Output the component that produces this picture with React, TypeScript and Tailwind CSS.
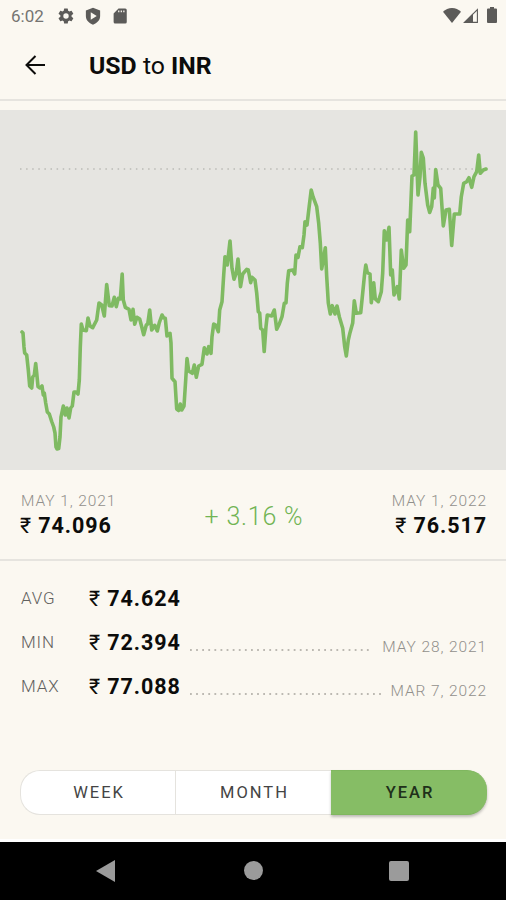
import clsx from "clsx";

const history: Array<[number, number]> = [
  [22, 332], [23, 333], [24, 347], [24.7, 353], [26.7, 355], [28.3, 370], [29.7, 386], [31.7, 388], [32.7, 377], [34.3, 375],
  [35.7, 363.5], [36.7, 373], [38, 386.5], [40, 388], [42, 386], [43.3, 395], [44.3, 393], [45.7, 403], [47.3, 412], [49.3, 414],
  [51.7, 421.5], [53.7, 427], [55, 433], [56, 447], [57, 449], [58.7, 448.5], [60, 437], [61, 417], [63.3, 406], [65.3, 415],
  [67, 408], [69, 418], [70.7, 408], [72.3, 406], [74, 392], [76, 392], [78, 394], [79.3, 380], [80.3, 347], [81.3, 324],
  [83, 330], [86.3, 330.7], [88, 318], [90, 326], [92.7, 327.7], [96.7, 320], [99, 303], [101.7, 305], [104.3, 316], [106.7, 284.5],
  [109.3, 305.7], [112, 306], [114.3, 297.3], [116.3, 306.7], [118.3, 298.3], [120.3, 299], [122.2, 274], [123.3, 300], [125.3, 307.3], [129, 309.3],
  [131, 320], [133, 309.3], [134.7, 324.3], [137, 317.3], [139.7, 319], [141.7, 326.7], [143.7, 334.7], [146.3, 325], [147.7, 324], [149.7, 310],
  [151.7, 330], [154.7, 325.3], [157.3, 331], [159.3, 322.7], [162, 315], [163.7, 318], [165.3, 318.3], [167, 336], [170, 333.3], [171, 343],
  [172, 378.3], [175, 381.7], [176.7, 409], [178.7, 410.5], [180.3, 404], [181.7, 410], [184, 406], [185.7, 380], [187, 358.5], [188.7, 371],
  [192.3, 373.3], [194.3, 365], [196.3, 377.3], [198.7, 366], [202, 364.3], [204.3, 347.7], [207, 354], [208.7, 346.7], [211, 353.3], [212, 336.7],
  [213.7, 324], [215.7, 325], [218.3, 331.7], [219.7, 310], [222, 301.7], [223.7, 275], [225, 256.7], [227.3, 265], [230, 241], [232, 268.3],
  [234, 279.3], [236.3, 273], [238, 259], [240.5, 286.7], [242.7, 274], [246.7, 269.3], [248.3, 270], [250.7, 282.7], [252, 277.3], [255, 280],
  [256.7, 293], [258.3, 311.7], [259.7, 313], [260.7, 328.3], [262.7, 330], [264.2, 351.5], [266, 326.7], [267.3, 315], [271.7, 316], [274.3, 310],
  [276.7, 329.3], [279.3, 324], [282, 316.7], [284.3, 303.3], [286, 303], [287.3, 283.3], [288.7, 270.7], [292.7, 270], [294.7, 274], [296, 255],
  [298, 257.3], [300, 246.7], [302.3, 247.7], [304, 235], [305, 221.7], [307, 225], [309, 208], [311.2, 190], [313, 196.7], [316.7, 206.7],
  [318.7, 223.3], [320.3, 243], [321.7, 269], [323.3, 260], [325.3, 247.7], [326.7, 276.7], [328.3, 303], [330.3, 314], [332.3, 305.7], [335, 314],
  [337, 306], [339.3, 316.7], [342.7, 328.3], [344.7, 346.7], [346.3, 356], [348.3, 340], [350, 332.7], [352.7, 323], [354.3, 300.7], [356.3, 313.3],
  [360.7, 312.7], [362.7, 293], [364.7, 273], [365.8, 265], [367.3, 272.7], [370, 274], [371.3, 302.7], [373.7, 282.7], [375.3, 299], [378.3, 301.7],
  [381.3, 291.7], [382.7, 273], [384.3, 230.7], [386.7, 240], [389, 227.3], [390.7, 275], [392.3, 270], [394, 295], [397.3, 286.7], [399.3, 299],
  [401.3, 250], [403.7, 268.3], [406, 265], [407.7, 220], [409.7, 231.7], [412, 176], [414, 175], [415.7, 132], [418, 195], [420, 176.7],
  [421.3, 152.3], [423.3, 158], [425, 183.3], [427.7, 205], [429.7, 212.5], [431.7, 206.7], [433.3, 188], [434.3, 198], [435.7, 169.5], [438, 185],
  [440.7, 188.3], [443.3, 226], [446, 210], [449.3, 209.3], [451.7, 245.5], [454.3, 214], [459.7, 214], [461.3, 196.7], [463.7, 183.3], [466.7, 181.7],
  [469, 177.7], [471.7, 187.3], [474, 176.7], [476.7, 171.7], [478.7, 155], [480.3, 173.3], [483.3, 170], [486, 169],
];

const stats = [
  { label: "AVG", value: "74.624" },
  { label: "MIN", value: "72.394", date: "MAY 28, 2021" },
  { label: "MAX", value: "77.088", date: "MAR 7, 2022" },
];

const ranges = ["WEEK", "MONTH", "YEAR"];

function StatusBar() {
  return (
    <div className="flex h-8 items-center pr-[9px] pl-[11px] text-[#5c5b59]">
      <span className="w-[46px] text-[17px] leading-8 text-[#757471]">6:02</span>
      <svg className="-mt-px size-[18px]" viewBox="0 0 24 24" fill="currentColor">
        <path fillRule="evenodd" d="M19.4 13a7.6 7.6 0 0 0 0-2l2.1-1.6a.5.5 0 0 0 .1-.7l-2-3.4a.5.5 0 0 0-.6-.2l-2.5 1a7.3 7.3 0 0 0-1.7-1l-.4-2.7a.5.5 0 0 0-.5-.4h-4a.5.5 0 0 0-.5.4L9 5.1a7.7 7.7 0 0 0-1.7 1l-2.5-1a.5.5 0 0 0-.6.2l-2 3.4a.5.5 0 0 0 .1.7L4.5 11a8 8 0 0 0 0 2l-2.2 1.6a.5.5 0 0 0-.1.7l2 3.4a.5.5 0 0 0 .6.2l2.5-1a7.3 7.3 0 0 0 1.7 1l.4 2.7a.5.5 0 0 0 .5.4h4a.5.5 0 0 0 .5-.4l.4-2.7a7.7 7.7 0 0 0 1.7-1l2.5 1a.5.5 0 0 0 .6-.2l2-3.4a.5.5 0 0 0-.1-.7zM12 15.6a3.6 3.6 0 1 1 0-7.2 3.6 3.6 0 0 1 0 7.2z" />
      </svg>
      <svg className="-mt-px ml-[9px] size-[18px]" viewBox="0 0 24 24" fill="currentColor">
        <path fillRule="evenodd" d="M12 1 2.5 4.5V12c0 5.5 4 9.5 9.5 11.5 5.5-2 9.5-6 9.5-11.5V4.5zM9 7v10l8-5z" />
      </svg>
      <svg className="-mt-px ml-[9px] size-[18px]" viewBox="0 0 24 24" fill="currentColor">
        <path fillRule="evenodd" d="M19 2h-9L3.5 8.5V20a2 2 0 0 0 2 2H19a2 2 0 0 0 2-2V4a2 2 0 0 0-2-2zM9.500 4.500h1.700V7H9.500zm3.400 0h1.700V7h-1.700zm3.400 0H18V7h-1.700z" />
      </svg>
      <svg className="-mt-[2px] ml-auto h-[15px] w-[18px]" viewBox="0 0 18 15" fill="currentColor">
        <path d="M9 15 0 3.8C2.5 1.3 5.5 0 9 0s6.500 1.300 9 3.800z" />
      </svg>
      <svg className="-mt-px ml-[2px] h-[15px] w-[15px]" viewBox="0 0 15 15">
        <path d="M1.5 14.4 14.4 1.5v12.900z" fill="none" stroke="currentColor" strokeWidth="1.1" />
        <path d="M.5 15 10 5.5V15z" fill="currentColor" />
      </svg>
      <svg className="-mt-[2px] ml-[9px] h-4 w-[10px]" viewBox="0 0 10 16" fill="currentColor">
        <path d="M3 0h4v1.5h2a1 1 0 0 1 1 1V15a1 1 0 0 1-1 1H1a1 1 0 0 1-1-1V2.5a1 1 0 0 1 1-1h2z" />
      </svg>
    </div>
  );
}

function RateChart() {
  const points = history.map(([x, y]) => `${x},${y}`).join(" ");
  return (
    <svg className="block h-[360px] w-full bg-[#e6e5e1]" viewBox="0 110 506 360">
      <line x1="20" x2="486" y1="169" y2="169" stroke="#bbbab6" strokeWidth="1.5" strokeDasharray="1.5 4.6" />
      <polyline points={points} fill="none" stroke="#7fba62" strokeWidth="3.6" strokeLinejoin="round" strokeLinecap="round" />
    </svg>
  );
}

function Amount({ value }: { value: string }) {
  return (
    <span className="text-[21.5px] leading-6 font-bold tracking-[0.95px] whitespace-pre text-[#0c0c0b]">
      <span className="font-normal tracking-normal">₹</span>
      <span className="ml-[7px]">{value}</span>
    </span>
  );
}

function Endpoint({ date, value, right }: { date: string; value: string; right?: boolean }) {
  return (
    <div className={clsx("flex flex-col", right && "items-end")}>
      <span className={clsx("text-[15.5px] leading-5 font-light tracking-[0.9px] text-[#92908c]", right ? "-mr-px" : "ml-px")}>{date}</span>
      <span className={clsx("mt-[3px] flex", right && "-mr-px")}>
        <Amount value={value} />
      </span>
    </div>
  );
}

export default function App() {
  return (
    <div className="flex h-[900px] w-[506px] flex-col overflow-hidden bg-[#fbf8f1] font-[Roboto,sans-serif]">
      <StatusBar />
      <header className="flex h-[69px] items-center border-b-2 border-[#e6e4df] pl-[25px]">
        <svg className="-mt-[2px] size-5" viewBox="0 0 20 20" fill="none" stroke="#0c0c0b" strokeWidth="2">
          <path d="M20 10H2M10.5 1 1.5 10l9 9" />
        </svg>
        <h1 className="mt-px ml-[44px] text-[24.8px] text-[#0c0c0b]">
          <b>USD</b> to <b>INR</b>
        </h1>
      </header>
      <div className="mt-[9px]">
        <RateChart />
      </div>

      <section className="flex h-[91px] items-start justify-between border-b-2 border-[#e6e4df] px-5 pt-[21px]">
        <Endpoint date="MAY 1, 2021" value="74.096" />
        <span className="mt-[11px] text-[25px] leading-[30px] font-light tracking-[0.8px] text-[#71b454]">+ 3.16 %</span>
        <Endpoint date="MAY 1, 2022" value="76.517" right />
      </section>

      <section className="flex flex-col pt-4 pr-[19px] pl-5">
        {stats.map((stat) => (
          <div key={stat.label} className="flex h-11 items-center">
            <span className="w-[69px] pl-px text-[17px] font-light tracking-[0.9px] text-[#62615e]">{stat.label}</span>
            <Amount value={stat.value} />
            {stat.date ? (
              <>
                <svg className="mt-[13px] ml-[9px] h-[2px] min-w-0 flex-1" aria-hidden="true">
                  <line x1="0" x2="100%" y1="1" y2="1" stroke="#bcb9b2" strokeWidth="1.8" strokeDasharray="1.8 4.3" />
                </svg>
                <span className="mt-[9px] ml-[9px] text-[15.5px] font-light tracking-[0.9px] text-[#92908c]">{stat.date}</span>
              </>
            ) : null}
          </div>
        ))}
      </section>

      <div className="mx-5 mt-[61px] flex h-[45px] w-[467px]">
        {ranges.map((range) => (
          <button
            key={range}
            type="button"
            className={clsx(
              "flex items-center justify-center border-y pt-[2px] pl-[2px] text-[16.5px] tracking-[2px]",
              range === "YEAR"
                ? "grow rounded-r-[20px] border-[#7fb75f] bg-[#86bd65] font-medium text-[#20301a] shadow-[0_2px_3px_rgba(0,0,0,0.25)]"
                : "border-l border-[#e5e3de] bg-white text-[#444]",
              range === "WEEK" && "w-[155px] rounded-l-[20px]",
              range === "MONTH" && "w-[156px]",
            )}
          >
            {range}
          </button>
        ))}
      </div>

      <nav className="mt-auto flex h-[61px] shrink-0 items-center border-t-[3px] border-white bg-black">
        <svg className="-mt-px ml-[96px] h-[22px] w-[19px]" viewBox="0 0 19 22" fill="#9b9b9b">
          <path d="M0 11 19 0v22z" />
        </svg>
        <span className="-mt-px ml-[129px] size-[19px] rounded-full bg-[#9b9b9b]" />
        <span className="-mt-px ml-[126px] size-5 rounded-[2px] bg-[#9b9b9b]" />
      </nav>
    </div>
  );
}
